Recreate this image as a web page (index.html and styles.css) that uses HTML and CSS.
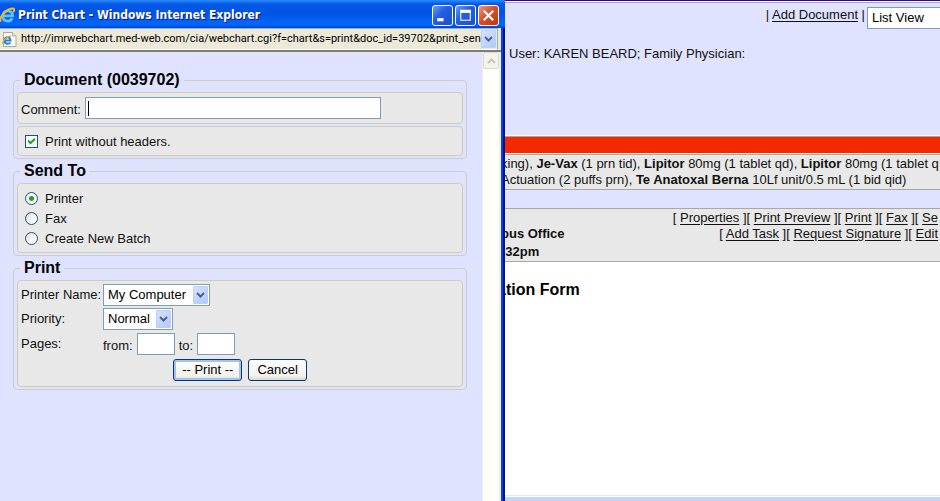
FILE: index.html
```html
<!DOCTYPE html>
<html lang="en">
<head>
<meta charset="utf-8">
<title>Print Chart</title>
<link rel="stylesheet" href="styles.css">
</head>
<body>
<div class="desktop">
  <section class="popup">
    <header class="titlebar">
      <svg class="logo" viewBox="0 0 16 18" aria-hidden="true">
        <path d="M3.500 10.000H13.500C13.500 2.500 3 3 3 10C3 16.500 11 17 13 12.500" fill="none" stroke="#5cc4ff" stroke-width="3"/>
        <path d="M1 16C-2 12 7 2 14 2C16 2 15 5 14 6" fill="none" stroke="#f5b92e" stroke-width="2"/>
      </svg>
      <h1 class="window-title">Print Chart - Windows Internet Explorer</h1>
      <div class="window-buttons">
        <button class="win-btn" type="button" aria-label="Minimize"><svg viewBox="0 0 18 18"><path d="M4 13H10" stroke="#fff" stroke-width="3"/></svg></button>
        <button class="win-btn" type="button" aria-label="Maximize"><svg viewBox="0 0 18 18"><path d="M4.500 4V13.500H13.500V4" fill="none" stroke="#fff"/><path d="M4 5H14" stroke="#fff" stroke-width="3"/></svg></button>
        <button class="win-btn close" type="button" aria-label="Close"><svg viewBox="0 0 18 18"><path d="M4.500 4.500L13.500 13.500M13.500 4.500L4.500 13.500" stroke="#fff" stroke-width="2.200"/></svg></button>
      </div>
    </header>
    <div class="frame">
      <div class="address">
        <div class="address-field">
          <svg class="favicon" viewBox="0 0 15 17" aria-hidden="true">
            <path d="M1.500 1.500H10.500L14 5V15.500H1.500Z" fill="#fff" stroke="#aaa89c"/>
            <path d="M10.500 1.500V5H14" fill="#e6e6e6" stroke="#aaa89c"/>
            <path d="M3 9.500H8.500C8.500 5 2.500 5.500 2.500 9.500C2.500 13.500 7 13.500 8.500 11.500" fill="none" stroke="#1f83d8" stroke-width="2"/>
            <path d="M1 13C0 10 5 5 9 5" fill="none" stroke="#eaa827" stroke-width="1.300"/>
          </svg>
          <span class="url">http://imrwebchart.med-web.com/cia/webchart.cgi?f=chart&amp;s=print&amp;doc_id=39702&amp;print_sen</span>
          <button class="arrow" type="button" aria-label="Address list"><svg viewBox="0 0 9 6"><path d="M1 1L4.500 4.500L8 1" fill="none" stroke="#4d6185" stroke-width="2"/></svg></button>
        </div>
      </div>
      <div class="view">
        <form class="form">
          <fieldset class="group">
            <legend>Document (0039702)</legend>
            <div class="box comment-row">
              <label for="comment">Comment:</label>
              <input class="field comment" id="comment" type="text">
              <span class="caret"></span>
            </div>
            <div class="box options">
              <div class="option"><input type="checkbox" id="noheaders" checked><label for="noheaders">Print without headers.</label></div>
            </div>
          </fieldset>
          <fieldset class="group">
            <legend>Send To</legend>
            <div class="box options">
              <div class="option"><input type="radio" name="to" id="printer" checked><label for="printer">Printer</label></div>
              <div class="option"><input type="radio" name="to" id="fax"><label for="fax">Fax</label></div>
              <div class="option"><input type="radio" name="to" id="batch"><label for="batch">Create New Batch</label></div>
            </div>
          </fieldset>
          <fieldset class="group">
            <legend>Print</legend>
            <div class="box">
              <div class="settings">
                <label for="name">Printer Name:</label>
                <span class="select"><select class="field" id="name"><option>My Computer</option></select><span class="arrow"><svg viewBox="0 0 9 6"><path d="M1 1L4.500 4.500L8 1" fill="none" stroke="#4d6185" stroke-width="2"/></svg></span></span>
                <label for="priority">Priority:</label>
                <span class="select"><select class="field" id="priority"><option>Normal</option></select><span class="arrow"><svg viewBox="0 0 9 6"><path d="M1 1L4.500 4.500L8 1" fill="none" stroke="#4d6185" stroke-width="2"/></svg></span></span>
                <span>Pages:</span>
                <span class="pages"><label for="from">from:</label><input class="field page" id="from" type="text"><label for="until">to:</label><input class="field page" id="until" type="text"></span>
              </div>
              <div class="actions">
                <button class="btn default" type="button">-- Print --</button>
                <button class="btn" type="button">Cancel</button>
              </div>
            </div>
          </fieldset>
        </form>
        <div class="scrollbar">
          <button class="scroll-up" type="button" aria-label="Scroll up"><svg viewBox="0 0 9 6"><path d="M1 5L4.500 1.500L8 5" fill="none" stroke="#c9c7ba" stroke-width="2"/></svg></button>
        </div>
      </div>
    </div>
  </section>

  <main class="chart">
    <div class="top">
      <div class="tools">
        <span>| <a href="#">Add Document</a> |</span>
        <select class="field list" aria-label="View"><option>List View</option></select>
      </div>
      <p class="user">User: KAREN BEARD; Family Physician:</p>
    </div>
    <div class="alert"></div>
    <div class="panel meds">
      <p>king), <b>Je-Vax</b> (1 prn tid), <b>Lipitor</b> 80mg (1 tablet qd), <b>Lipitor</b> 80mg (1 tablet q</p>
      <p>Actuation (2 puffs prn), <b>Te Anatoxal Berna</b> 10Lf unit/0.5 mL (1 bid qid)</p>
    </div>
    <div class="panel visit">
      <div class="place"><b>pus Office</b><b>:32pm</b></div>
      <nav class="links">
        <div>[ <a href="#">Properties</a> ][ <a href="#">Print Preview</a> ][ <a href="#">Print</a> ][ <a href="#">Fax</a> ][ <a href="#">Se</a></div>
        <div>[ <a href="#">Add Task</a> ][ <a href="#">Request Signature</a> ][ <a href="#">Edit</a></div>
      </nav>
    </div>
    <article class="document"><h2>ation Form</h2></article>
    <footer class="status"></footer>
  </main>
</div>
</body>
</html>
```
FILE: styles.css
```css
* { box-sizing: border-box; }
body { margin: 0; font: 13px/16px "Liberation Sans", Arial, sans-serif; color: #111; }
h1, h2, p { margin: 0; }
svg { display: block; }
button, input, select { font: inherit; color: #000; margin: 0; }
a { color: inherit; text-decoration: underline; text-underline-offset: 2px; }

.desktop {
  display: grid;
  grid-template-columns: minmax(0, 505fr) minmax(0, 435fr);
  min-height: 100vh;
  overflow: hidden;
}

/* Popup window */
.popup { display: flex; flex-direction: column; background: #dfe3ff; }
.titlebar {
  display: flex;
  align-items: center;
  gap: 3px;
  height: 28px;
  padding: 2px 6px 0 0;
  background: linear-gradient(#2a8dff 0, #0558e6 4px, #0054e3 14px, #0264fb 22px, #0264fb 25px, #0142c4 28px);
}
.logo { width: 15px; height: 18px; }
.window-title {
  flex: 1;
  color: #fff;
  font: bold 12px/18px "DejaVu Sans Condensed", "Open Sans", sans-serif;
  text-shadow: 1px 1px 0 #0a1883;
  white-space: nowrap;
}
.window-buttons { display: flex; gap: 2px; }
.win-btn {
  width: 21px;
  height: 21px;
  padding: 0;
  border: 1px solid #fff;
  border-radius: 3px;
  background: linear-gradient(135deg, #6f9cf8, #2560e0 40%, #1a4fd0);
}
.win-btn.close { background: linear-gradient(135deg, #f09a7c, #df4d26 45%, #c03410); }

.frame {
  flex: 1;
  display: flex;
  flex-direction: column;
  padding-right: 4px;
  background: linear-gradient(270deg, #00138c 2px, #0a3ff0 2px, #0a3ff0 4px, transparent 4px);
}
.address {
  height: 24px;
  padding: 0 3px 0 0;
  background: #ece9d8;
  border-bottom: 2px solid #807d72;
}
.address-field {
  display: flex;
  align-items: center;
  height: 22px;
  padding: 0 1px 0 2px;
  border: 1px solid #8fb0d8;
  border-width: 1px 1px 1px 0;
  border-bottom-color: #fff;
}
.favicon { width: 15px; height: 17px; margin-right: 4px; }
.url {
  flex: 1;
  min-width: 0;
  overflow: hidden;
  white-space: nowrap;
  font: 11px/18px Roboto, sans-serif;
  color: #000;
}
.arrow {
  display: flex;
  align-items: center;
  justify-content: center;
  width: 15px;
  height: 18px;
  padding: 0;
  border: 1px solid #bccdf8;
  border-radius: 1px;
  background: linear-gradient(135deg, #d6e2ff, #b2c8f8);
}
.arrow svg, .scroll-up svg { width: 9px; height: 6px; }

.view { flex: 1; display: flex; }
.form { flex: 1; min-width: 0; padding: 19px 15px 16px 13px; }
.scrollbar { width: 19px; background: #fefefb; border-left: 1px solid #eeeee6; border-right: 2px solid #f1efe6; }
.scroll-up {
  display: flex;
  align-items: center;
  justify-content: center;
  width: 16px;
  height: 17px;
  padding: 0;
  border: 1px solid #dcdacd;
  border-radius: 2px;
  background: #f4f3ee;
}

.group {
  min-width: 0;
  margin: 0 0 3px;
  padding: 3px 3px 2px;
  border: 1px solid #cdcdc0;
  border-radius: 4px;
}
.group legend { margin-left: 3px; padding: 0 4px; font: bold 16px/18px "Liberation Sans", Arial, sans-serif; color: #000; }
.box { padding: 3px; background: #e8e8e8; border: 1px solid #cdcdb8; border-radius: 4px; }
.box + .box { margin-top: 2px; }
.comment-row { position: relative; display: flex; align-items: center; gap: 4px; padding: 4px 3px; }
.comment-row label { padding-top: 4px; }
.field {
  height: 22px;
  padding: 0 4px;
  border: 1px solid #7f9db9;
  border-radius: 0;
  background: #fff;
  appearance: none;
}
.comment { flex: 0 1 296px; min-width: 0; }
.caret { position: absolute; left: 70px; top: 8px; width: 1px; height: 15px; background: #000; }
.options { padding: 4px 7px; }
.option { display: flex; align-items: center; gap: 7px; height: 20px; }
.option label { padding-top: 2px; }
.option input { appearance: none; width: 13px; height: 13px; border: 1px solid #1c5180; background: #fff; }
.option input[type="radio"] { border-radius: 50%; background: linear-gradient(135deg, #dcdcd8, #fff 70%); }
.option input[type="radio"]:checked { background: radial-gradient(circle, #21a121 0 2px, #fff 3px); }
.option input[type="checkbox"] { display: grid; place-items: center; }
.option input[type="checkbox"]::before {
  content: "";
  width: 7px;
  height: 7px;
  background: #21a121;
  clip-path: polygon(0 28%, 0 65%, 35% 100%, 100% 40%, 100% 0, 35% 58%);
}

.settings { display: grid; grid-template-columns: 82px 1fr; row-gap: 2px; align-items: center; }
.select { position: relative; justify-self: start; }
.select .field { display: block; padding-right: 22px; }
.select .arrow { position: absolute; right: 2px; top: 2px; pointer-events: none; }
.pages { display: flex; align-items: center; gap: 4px; height: 24px; }
.pages label { padding-top: 4px; }
.page { width: 38px; }
.actions { display: flex; justify-content: center; gap: 6px; padding: 3px 0 2px; }
.btn {
  height: 22px;
  padding: 0 8px;
  border: 1px solid #003c74;
  border-radius: 3px;
  background: linear-gradient(#fff, #f3f2ec 80%, #dcd8cd);
}
.btn.default { box-shadow: inset 0 0 0 2px #a9c0ee; }

/* Chart page behind the popup */
.chart {
  display: flex;
  flex-direction: column;
  min-width: 0;
  overflow: hidden;
  white-space: nowrap;
  background: #dfe3ff;
  border-top: 1px solid #330099;
}
.top { height: 135px; border-top: 1px solid #fff; border-bottom: 1px solid #fff; box-shadow: inset 0 1px #aca899; }
.tools { display: flex; justify-content: flex-end; align-items: flex-start; gap: 2px; padding-top: 5px; }
.list { width: 78px; margin-right: -5px; }
.user { padding: 17px 4px 0; }
.alert { height: 18px; background: #f52900; border-top: 1px solid #aca899; border-bottom: 1px solid #fff; }
.panel { background: #e8e8e8; border-top: 1px solid #aca899; border-bottom: 1px solid #aca899; }
.meds { padding: 1px 0; margin-bottom: 18px; }
.meds p, .place { margin-left: -4px; }
.visit { display: flex; justify-content: space-between; height: 54px; padding-top: 1px; }
.place { display: flex; flex-direction: column; gap: 2px; padding-top: 16px; }
.links { padding-right: 2px; text-align: right; }
.document { flex: 1; background: #fff; border-bottom: 1px solid #e8e8e4; padding-top: 18px; }
.document h2 { margin-left: -8px; font: bold 16px/20px "Liberation Sans", Arial, sans-serif; color: #000; }
.status { height: 5px; background: #c5d3ff; border-top: 1px solid #fff; }
```
